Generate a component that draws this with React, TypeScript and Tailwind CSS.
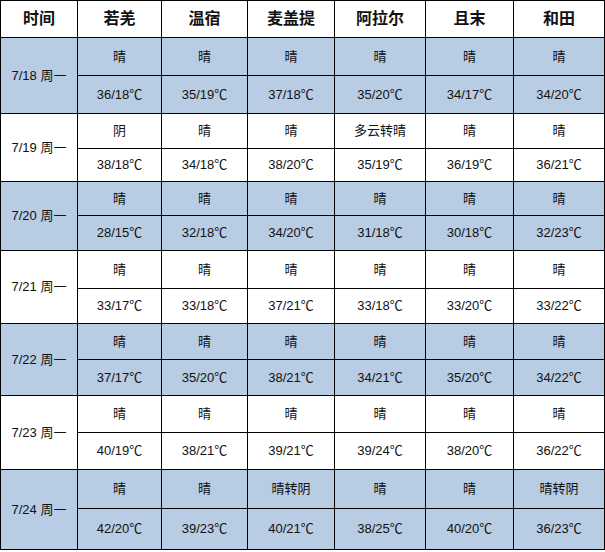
import React from 'react'

interface DayRow {
  date: string
  weather: string[]
  temps: string[]
  // 子行高度：天气 / 温度
  h: [string, string]
}

const cities = ['若羌', '温宿', '麦盖提', '阿拉尔', '且末', '和田']

const days: DayRow[] = [
  {
    date: '7/18 周一',
    weather: ['晴', '晴', '晴', '晴', '晴', '晴'],
    temps: ['36/18', '35/19', '37/18', '35/20', '34/17', '34/20'],
    h: ['h-[38px]', 'h-[38px]'],
  },
  {
    date: '7/19 周一',
    weather: ['阴', '晴', '晴', '多云转晴', '晴', '晴'],
    temps: ['38/18', '34/18', '38/20', '35/19', '36/19', '36/21'],
    h: ['h-[35px]', 'h-[33px]'],
  },
  {
    date: '7/20 周一',
    weather: ['晴', '晴', '晴', '晴', '晴', '晴'],
    temps: ['28/15', '32/18', '34/20', '31/18', '30/18', '32/23'],
    h: ['h-[34px]', 'h-[35px]'],
  },
  {
    date: '7/21 周一',
    weather: ['晴', '晴', '晴', '晴', '晴', '晴'],
    temps: ['33/17', '33/18', '37/21', '33/18', '33/20', '33/22'],
    h: ['h-[38px]', 'h-[35px]'],
  },
  {
    date: '7/22 周一',
    weather: ['晴', '晴', '晴', '晴', '晴', '晴'],
    temps: ['37/17', '35/20', '38/21', '34/21', '35/20', '34/22'],
    h: ['h-[36px]', 'h-[36px]'],
  },
  {
    date: '7/23 周一',
    weather: ['晴', '晴', '晴', '晴', '晴', '晴'],
    temps: ['40/19', '38/21', '39/21', '39/24', '38/20', '36/22'],
    h: ['h-[37px]', 'h-[37px]'],
  },
  {
    date: '7/24 周一',
    weather: ['晴', '晴', '晴转阴', '晴', '晴', '晴转阴'],
    temps: ['42/20', '39/23', '40/21', '38/25', '40/20', '36/23'],
    h: ['h-[39px]', 'h-[41px]'],
  },
]

const cell = 'border border-black text-center align-middle p-0'

export default function App() {
  return (
    <div
      className="w-[605px] h-[552px] bg-white text-[13px] text-[#111]"
      style={{ fontFamily: '"Liberation Sans", "Noto Sans CJK SC", sans-serif' }}>
      <table className="w-[604px] table-fixed border-collapse">
        <colgroup>
          <col className="w-[77px]" />
          <col className="w-[84px]" />
          <col className="w-[86px]" />
          <col className="w-[87px]" />
          <col className="w-[91px]" />
          <col className="w-[88px]" />
          <col className="w-[91px]" />
        </colgroup>
        <thead>
          <tr className="h-[37px]">
            <th className={`${cell} text-[16px] font-bold`}>时间</th>
            {cities.map((c) => (
              <th key={c} className={`${cell} text-[16px] font-bold`}>
                {c}
              </th>
            ))}
          </tr>
        </thead>
        <tbody>
          {days.map((d, i) => {
            const bg = i % 2 === 0 ? 'bg-[#b8cce4]' : 'bg-white'
            return (
              <React.Fragment key={d.date}>
                <tr className={`${d.h[0]} ${bg}`}>
                  <td rowSpan={2} className={cell}>
                    {d.date}
                  </td>
                  {d.weather.map((w, j) => (
                    <td key={j} className={cell}>
                      {w}
                    </td>
                  ))}
                </tr>
                <tr className={`${d.h[1]} ${bg}`}>
                  {d.temps.map((t, j) => (
                    <td key={j} className={cell}>
                      {t}℃
                    </td>
                  ))}
                </tr>
              </React.Fragment>
            )
          })}
        </tbody>
      </table>
    </div>
  )
}
